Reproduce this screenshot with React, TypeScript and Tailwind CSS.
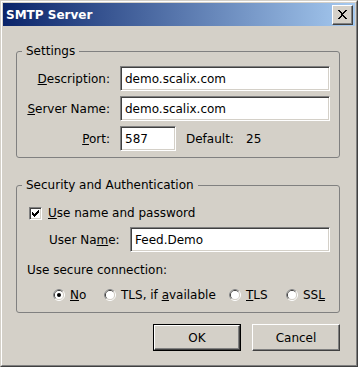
import React from "react";

const sunken =
  "border border-t-[#808080] border-l-[#808080] border-r-white border-b-white shadow-[inset_1px_1px_0_#404040,inset_-1px_-1px_0_#d4d0c8] bg-white";

function TextBox({ value, className }: { value: string; className: string }) {
  return (
    <div className={`${sunken} h-[25px] flex items-center pl-[4px] ${className}`}>
      <span className="leading-[14px]">{value}</span>
    </div>
  );
}

function Radio({ checked }: { checked?: boolean }) {
  return (
    <svg width="12" height="12" viewBox="0 0 12 12" className="shrink-0">
      <circle cx="6" cy="6" r="5.5" fill="none" stroke="#ffffff" />
      <path d="M2.1 9.9 A5.5 5.5 0 0 1 9.9 2.1" fill="none" stroke="#808080" />
      <circle cx="6" cy="6" r="4.5" fill="none" stroke="#d4d0c8" />
      <path d="M2.8 9.2 A4.5 4.5 0 0 1 9.2 2.8" fill="none" stroke="#404040" />
      <circle cx="6" cy="6" r="4" fill="#ffffff" />
      {checked && <circle cx="6" cy="6" r="2" fill="#000000" />}
    </svg>
  );
}

function RadioItem({ label, checked, w }: { label: React.ReactNode; checked?: boolean; w: string }) {
  return (
    <div className={`flex items-center gap-[5px] ${w}`}>
      <Radio checked={checked} />
      <span className="leading-[14px] whitespace-nowrap">{label}</span>
    </div>
  );
}

function Button({ label, isDefault }: { label: string; isDefault?: boolean }) {
  return (
    <div className={`w-[88px] h-[27px] ${isDefault ? "border border-black" : ""} bg-[#d4d0c8]`}>
      <div className="w-full h-full border border-t-white border-l-white border-r-[#404040] border-b-[#404040] shadow-[inset_-1px_-1px_0_#808080] flex items-center justify-center">
        <span className="leading-[14px]">{label}</span>
      </div>
    </div>
  );
}

export default function App() {
  return (
    <div
      className="w-[358px] h-[367px] bg-[#d4d0c8] text-[12px] text-black"
      style={{ fontFamily: '"DejaVu Sans", Tahoma, sans-serif' }}
    >
      <div className="w-full h-full border border-t-[#d4d0c8] border-l-[#d4d0c8] border-r-[#404040] border-b-[#404040]">
        <div className="w-full h-full border border-t-white border-l-white border-r-[#808080] border-b-[#808080] p-[1px] flex flex-col">
          {/* Title bar */}
          <div className="h-[23px] flex items-center justify-between pl-[3px] pr-[2px] bg-[linear-gradient(to_right,#0a246a,#a6caf0)] shrink-0">
            <span className="text-white font-bold leading-[14px]">SMTP Server</span>
            <div className="w-[21px] h-[20px] bg-[#d4d0c8] border border-t-white border-l-white border-r-[#404040] border-b-[#404040] shadow-[inset_-1px_-1px_0_#808080] flex items-center justify-center">
              <svg width="9" height="9" viewBox="0 0 9 9" shapeRendering="crispEdges">
                <path d="M0 0h2l2.5 3 2.5-3h2l-3.5 4.5 3.5 4.5h-2l-2.5-3-2.5 3h-2l3.5-4.5z" fill="#000" />
              </svg>
            </div>
          </div>

          {/* Body */}
          <div className="flex flex-col pl-[13px] pr-[15px] pt-[18px]">
            {/* Settings group */}
            <fieldset className="border border-[#808080] rounded-[3px] p-0 m-0 min-w-0">
              <legend className="ml-[5px] px-[4px] leading-[14px]">Settings</legend>
              <div className="pl-[9px] pt-[8px] pb-[6px] grid grid-cols-[84px_210px] gap-x-[10px] gap-y-[5px] items-center">
                <div className="text-right leading-[14px]">
                  <u>D</u>escription:
                </div>
                <TextBox value="demo.scalix.com" className="w-[210px]" />
                <div className="text-right leading-[14px] whitespace-nowrap">
                  <u>S</u>erver Name:
                </div>
                <TextBox value="demo.scalix.com" className="w-[210px]" />
                <div className="text-right leading-[14px]">
                  <u>P</u>ort:
                </div>
                <div className="flex items-center">
                  <TextBox value="587" className="w-[56px]" />
                  <span className="ml-[10px] w-[60px] leading-[14px]">Default:</span>
                  <span className="leading-[14px]">25</span>
                </div>
              </div>
            </fieldset>

            {/* Security group */}
            <fieldset className="mt-[20px] border border-[#808080] rounded-[3px] p-0 m-0 min-w-0">
              <legend className="ml-[5px] px-[4px] leading-[14px]">Security and Authentication</legend>
              <div className="pt-[14px] pb-[10px] flex flex-col">
                <div className="pl-[12px] flex items-center gap-[6px] h-[14px]">
                  <div className="w-[13px] h-[13px] border border-t-[#808080] border-l-[#808080] border-r-white border-b-white shadow-[inset_1px_1px_0_#404040,inset_-1px_-1px_0_#d4d0c8] bg-white flex items-center justify-center">
                    <svg width="7" height="7" viewBox="0 0 7 7" shapeRendering="crispEdges">
                      <path d="M0 2h1v1h1v1h1v-1h1v-1h1v-1h1v-1h1v3h-1v1h-1v1h-1v1h-1v1h-1v-1h-1v-1h-1z" fill="#000" />
                    </svg>
                  </div>
                  <span className="leading-[14px]">
                    <u>U</u>se name and password
                  </span>
                </div>
                <div className="mt-[7px] pl-[32px] flex items-center">
                  <span className="w-[81px] leading-[14px] whitespace-nowrap">
                    User Na<u>m</u>e:
                  </span>
                  <TextBox value="Feed.Demo" className="w-[200px]" />
                </div>
                <div className="mt-[11px] pl-[10px] leading-[14px]">Use secure connection:</div>
                <div className="mt-[11px] pl-[36px] flex items-center h-[14px]">
                  <RadioItem w="w-[51px]" checked label={<><u>N</u>o</>} />
                  <RadioItem w="w-[125px]" label={<>TLS, if <u>a</u>vailable</>} />
                  <RadioItem w="w-[57px]" label={<><u>T</u>LS</>} />
                  <RadioItem w="w-[50px]" label={<>SS<u>L</u></>} />
                </div>
              </div>
            </fieldset>

            {/* Buttons */}
            <div className="mt-[11px] flex justify-end gap-[11px]">
              <Button label="OK" isDefault />
              <Button label="Cancel" />
            </div>
          </div>
        </div>
      </div>
    </div>
  );
}
